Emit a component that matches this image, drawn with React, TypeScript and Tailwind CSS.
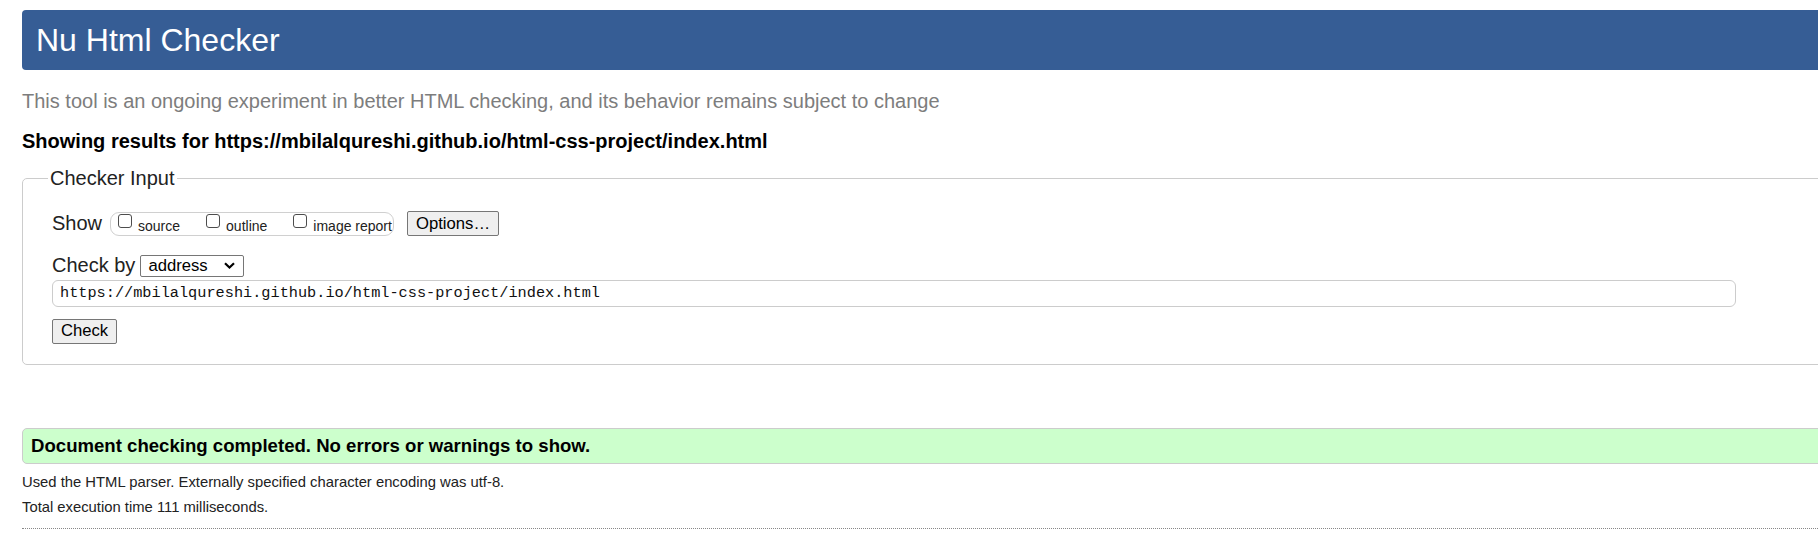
import React from 'react';

const SHOW_OPTIONS = ['source', 'outline', 'image report'];

function Checkbox({ label }: { label: string }) {
  return (
    <label className="flex items-center">
      <input type="checkbox" className="appearance-none w-[14px] h-[14px] mb-[6px] border border-[#4d4d4d] rounded-[3px] bg-white" />
      <span className="ml-[6px] mt-[4px] text-[14px] leading-[16px] text-[#222]">{label}</span>
    </label>
  );
}

function ChevronDown() {
  return (
    <svg width="11" height="7" viewBox="0 0 11 7" className="ml-auto mr-[8px]">
      <path d="M1 1.2 L5.5 5.5 L10 1.2" fill="none" stroke="#000" strokeWidth="2.2" />
    </svg>
  );
}

export default function App() {
  return (
    <div className="w-full h-[535px] overflow-hidden bg-white font-['Liberation_Sans',Arial,sans-serif] text-[#222]">
      <div className="w-[1840px] pl-[22px] pt-[10px]">
        {/* Title bar */}
        <h1 className="h-[60px] pl-[14px] bg-[#365d95] rounded-l-[4px] text-white text-[32px] leading-[60px] font-normal">
          Nu Html Checker
        </h1>

        <p className="mt-[20px] text-[20px] leading-[23px] text-[#7d7d7d]">
          This tool is an ongoing experiment in better HTML checking, and its behavior remains subject to change
        </p>
        <p className="mt-[17px] text-[20px] leading-[23px] font-bold text-black">
          Showing results for https://mbilalqureshi.github.io/html-css-project/index.html
        </p>

        {/* Checker input */}
        <fieldset className="mt-[14px] border border-[#cccccc] rounded-[5px] pl-[29px] pb-[20px]">
          <legend className="-ml-[4px] px-[2px] text-[20px] leading-[23px] text-[#222]">Checker Input</legend>

          <div className="mt-[21px] flex items-center h-[25px]">
            <span className="text-[20px] leading-[23px]">Show</span>
            <div className="ml-[8px] w-[284px] h-[24px] flex items-center gap-[26px] pl-[7px] border border-[#d0d0d0] rounded-[9px]">
              {SHOW_OPTIONS.map(o => <Checkbox key={o} label={o} />)}
            </div>
            <button className="ml-[13px] w-[92px] h-[25px] bg-[#efefef] border border-[#767676] rounded-[2px] text-[16.67px] leading-[20px] text-black">
              Options…
            </button>
          </div>

          <div className="mt-[18px] flex items-center h-[23px]">
            <span className="text-[20px] leading-[23px]">Check by</span>
            <div className="ml-[5px] w-[104px] h-[22px] flex items-center pl-[7px] border border-[#767676] rounded-[2px] text-[16.67px] leading-[20px] text-black">
              address
              <ChevronDown />
            </div>
          </div>

          <div className="mt-[3px] w-[1684px] h-[27px] flex items-center pl-[7px] border border-[#cccccc] rounded-[6px] font-['Liberation_Mono',monospace] text-[15.25px] text-[#111]">
            https://mbilalqureshi.github.io/html-css-project/index.html
          </div>

          <button className="mt-[11.5px] w-[65px] h-[25px] bg-[#efefef] border border-[#767676] rounded-[2px] text-[16.67px] leading-[20px] text-black">
            Check
          </button>
        </fieldset>

        {/* Result */}
        <div className="mt-[63px] h-[36px] flex items-center pl-[8px] bg-[#ccffcc] border border-[#cccccc] rounded-l-[5px]">
          <span className="text-[18.6px] font-bold text-black">Document checking completed. No errors or warnings to show.</span>
        </div>

        <p className="mt-[10px] text-[14.8px] leading-[17px] text-[#222]">
          Used the HTML parser. Externally specified character encoding was utf-8.
        </p>
        <p className="mt-[8px] text-[14.8px] leading-[17px] text-[#222]">Total execution time 111 milliseconds.</p>

        <hr className="mt-[12px] border-0 border-t border-dotted border-[#888]" />
      </div>
    </div>
  );
}
